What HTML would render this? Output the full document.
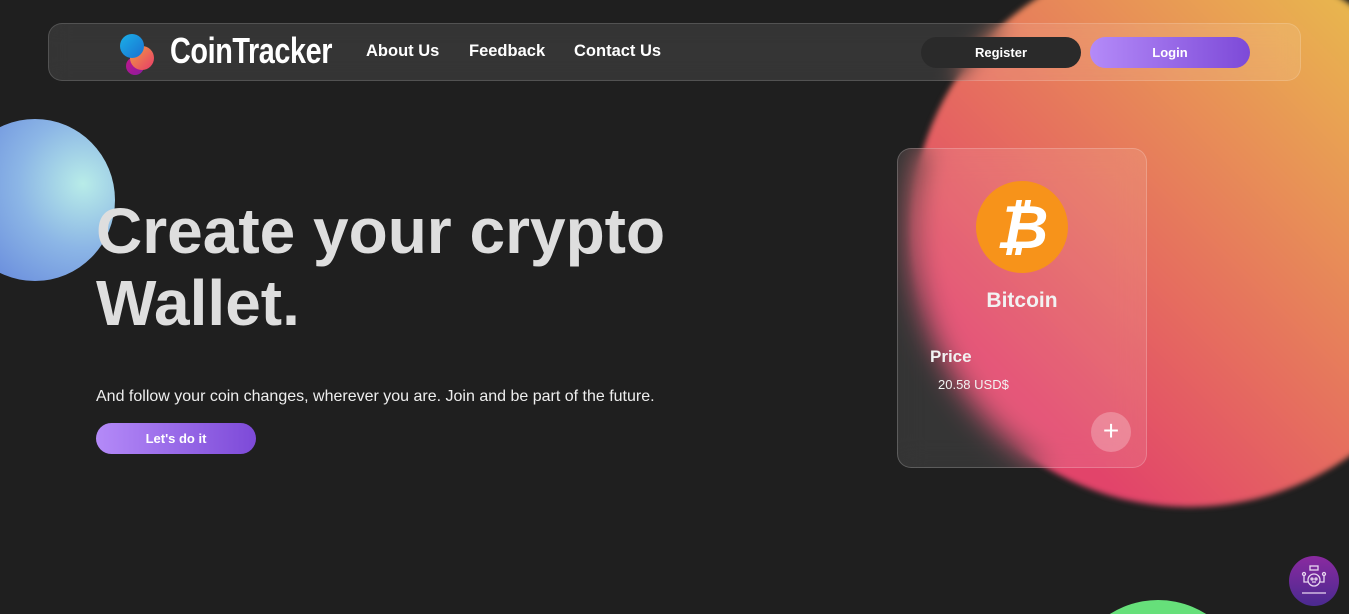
<!DOCTYPE html>
<html style="width:1349px;height:614px;overflow:hidden"><head><meta charset="utf-8"><style>
*{margin:0;padding:0;box-sizing:border-box}
body{width:1349px;height:614px;overflow:hidden;background:#1f1f1f;font-family:"Liberation Sans",Arial,sans-serif;position:relative;color:#fff}
.clip{position:absolute;left:0;top:0;width:1349px;height:614px;overflow:hidden}
.big{position:absolute;left:911px;top:-47px;width:556px;height:554px;border-radius:50%;background:linear-gradient(225deg,#e6d048 0%,#e9a552 25%,#e6705e 55%,#e2446a 80%);filter:blur(3px)}
.blue{position:absolute;left:-45px;top:119px;width:160px;height:162px;border-radius:50%;background:radial-gradient(circle at 80% 40%,#b8ece8 0%,#8cb6e6 40%,#5878d8 100%)}
.green{position:absolute;left:1068px;top:600px;width:180px;height:180px;border-radius:50%;background:#66e07a}
.nav{position:absolute;left:48px;top:23px;width:1253px;height:58px;border-radius:14px;background:rgba(255,255,255,0.1);border:1px solid rgba(255,255,255,0.15);backdrop-filter:blur(10px)}
.logo{position:absolute;left:170px;top:30px;font-size:36px;font-weight:bold;letter-spacing:-0.5px;transform:scaleX(0.8);transform-origin:left;color:#fff}
.links a{position:absolute;top:42px;font-size:16.5px;font-weight:bold;color:#fff}
.btn{position:absolute;height:31px;border-radius:16px;font-size:13px;font-weight:bold;display:flex;align-items:center;justify-content:center;color:#fff}
h1{position:absolute;left:96px;top:195px;font-size:64px;line-height:72px;color:#dedede;font-weight:bold}
.sub{position:absolute;left:96px;top:388px;font-size:16px;color:#eee}
.card{position:absolute;left:897px;top:148px;width:250px;height:320px;border-radius:14px;background:rgba(255,255,255,0.1);border:1px solid rgba(255,255,255,0.2);backdrop-filter:blur(14px)}
</style></head><body>
<div class="clip">
<div class="big"></div><div class="blue"></div><div class="green"></div>
<div class="nav"></div>
<div style="position:absolute;left:126px;top:57px;width:18px;height:18px;border-radius:50%;background:linear-gradient(135deg,#c2188a,#8a1aa0)"></div>
<div style="position:absolute;left:130px;top:46px;width:24px;height:24px;border-radius:50%;background:linear-gradient(135deg,#f0a040,#e83a6a)"></div>
<div style="position:absolute;left:120px;top:34px;width:24px;height:24px;border-radius:50%;background:linear-gradient(135deg,#1ab0e8,#1a70d0)"></div>
<div class="logo">CoinTracker</div>
<div class="links"><a style="left:366px">About Us</a><a style="left:469px">Feedback</a><a style="left:574px">Contact Us</a></div>
<div class="btn" style="left:921px;top:37px;width:160px;background:#2a2a2a">Register</div>
<div class="btn" style="left:1090px;top:37px;width:160px;background:linear-gradient(90deg,#b48af8,#7d4ad8)">Login</div>
<h1>Create your crypto<br>Wallet.</h1>
<div class="sub">And follow your coin changes, wherever you are. Join and be part of the future.</div>
<div class="btn" style="left:96px;top:423px;width:160px;background:linear-gradient(90deg,#b48af8,#7d4ad8)">Let's do it</div>
<div class="card">
<div style="position:absolute;left:78px;top:32px;width:92px;height:92px;border-radius:50%;background:#f7931a;display:flex;align-items:center;justify-content:center;font-size:60px;font-weight:bold;color:#fff;font-style:italic">₿</div>
<div style="position:absolute;left:0;width:248px;top:140px;text-align:center;font-size:21px;font-weight:bold;color:#f2f2f2">Bitcoin</div>
<div style="position:absolute;left:32px;top:198px;font-size:17px;font-weight:bold;color:#f2f2f2">Price</div>
<div style="position:absolute;left:40px;top:228px;font-size:13px;color:#f2f2f2">20.58 USD$</div>
<div style="position:absolute;left:193px;top:263px;width:40px;height:40px;border-radius:50%;background:rgba(255,255,255,0.25);text-align:center;line-height:38px;font-size:28px;color:#fff">+</div>
</div>
<div style="position:absolute;left:1289px;top:556px;width:50px;height:50px;border-radius:50%;background:linear-gradient(180deg,#8a2aa0,#4a2a90)">
<svg width="50" height="50" viewBox="0 0 50 50" fill="none" stroke="#e8d8f0" stroke-width="1.3"><rect x="21" y="10" width="8" height="4"/><circle cx="25" cy="24" r="6"/><circle cx="23" cy="23" r="1"/><circle cx="27" cy="23" r="1"/><path d="M23 26h4M15 19v7h4M35 19v7h-4M13 37h24"/><circle cx="15" cy="18" r="1.5"/><circle cx="35" cy="18" r="1.5"/></svg></div>
</div>
</body></html>
